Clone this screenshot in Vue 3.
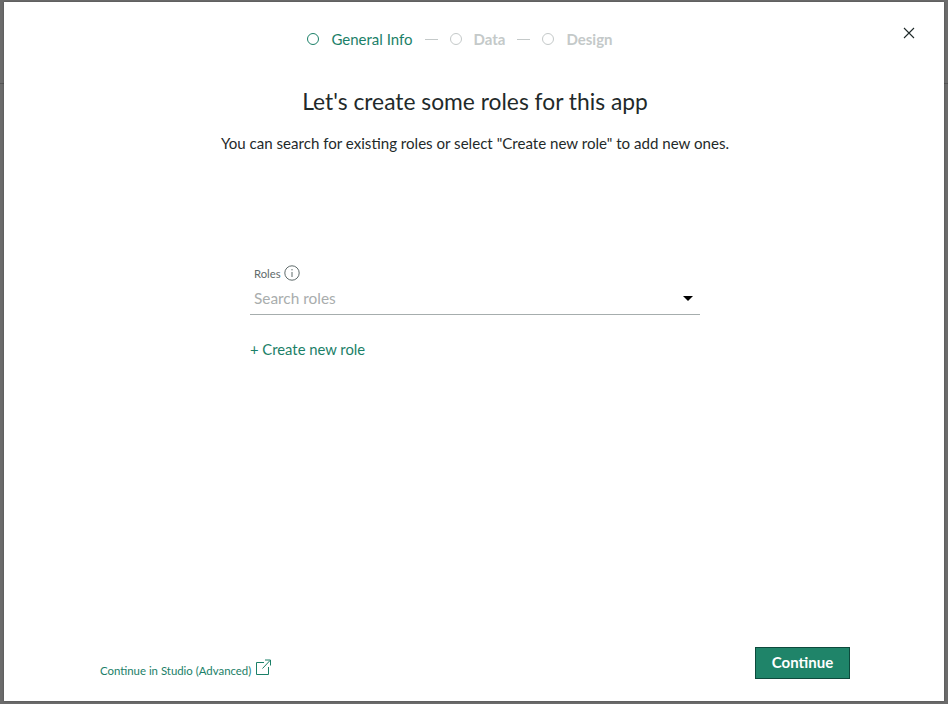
<script setup>
const steps = [
  { label: 'General Info', active: true },
  { label: 'Data', active: false },
  { label: 'Design', active: false },
]
</script>

<template>
  <div class="backdrop">
    <div class="band"></div>
    <div class="modal">
      <header class="top">
        <nav class="stepper">
          <template v-for="(s, i) in steps" :key="s.label">
            <span v-if="i" class="dash"></span>
            <span class="dot" :class="{ on: s.active }"></span>
            <span class="label" :class="{ on: s.active }">{{ s.label }}</span>
          </template>
        </nav>
        <button class="close" aria-label="Close">
          <svg width="12" height="12" viewBox="0 0 12 12"><path d="M1 1l10 10M11 1L1 11" stroke="#1f2a2a" stroke-width="1.1" fill="none"/></svg>
        </button>
      </header>
      <h1>Let's create some roles for this app</h1>
      <p class="sub">You can search for existing roles or select "Create new role" to add new ones.</p>
      <section class="form">
        <div class="field-label">
          <span>Roles</span>
          <svg width="16" height="16" viewBox="0 0 16 16"><circle cx="8" cy="8" r="7.2" fill="none" stroke="#5f6b6b" stroke-width="1"/><path d="M8 7v5M8 4v1.4" stroke="#5f6b6b" stroke-width="1" fill="none"/></svg>
        </div>
        <div class="select">
          <span>Search roles</span>
          <i class="caret"></i>
        </div>
        <a class="create">+ Create new role</a>
      </section>
      <footer class="bottom">
        <a class="studio">
          <span>Continue in Studio (Advanced)</span>
          <svg width="15" height="16" viewBox="0 0 15 16"><path d="M8 3.500H.5v12h12V8M6.500 9.500L14 1.500M9 1h5.500v5.500" fill="none" stroke="#1b8068" stroke-width="1"/></svg>
        </a>
        <button class="continue">Continue</button>
      </footer>
    </div>
  </div>
</template>

<style>
html, body { margin: 0; height: 100%; overflow: hidden; }
</style>

<style scoped>
.backdrop {
  position: relative;
  box-sizing: border-box;
  width: 948px;
  height: 704px;
  padding: 2px 4px 3px;
  background: #6b6b6b;
  font-family: "Lato", "Liberation Sans", sans-serif;
}
.band {
  position: absolute;
  left: 0;
  right: 0;
  top: 83px;
  height: 1px;
  background: #555;
}
.modal {
  position: relative;
  box-sizing: border-box;
  height: 100%;
  background: #fff;
  display: flex;
  flex-direction: column;
  align-items: center;
  box-shadow: 0 0 2px rgba(0, 0, 0, .3);
}
.top {
  align-self: stretch;
  display: flex;
  justify-content: center;
  padding: 27px 28px 0 0;
}
.stepper { display: flex; align-items: center; height: 20px; }
.dot {
  box-sizing: border-box;
  width: 12px;
  height: 12px;
  border-radius: 50%;
  border: 1px solid #c4c9c9;
}
.dot.on { border: 1.5px solid #1b8068; }
.label {
  margin-left: 12px;
  font-size: 15px;
  font-weight: 700;
  color: #c4c9c9;
}
.label.on { color: #1b8068; font-weight: 400; }
.dash { width: 13px; height: 1px; background: #c4c9c9; margin: 0 12px; }
.close {
  position: absolute;
  top: 25px;
  right: 29px;
  width: 12px;
  height: 12px;
  padding: 0;
  border: 0;
  background: none;
  display: flex;
}
h1 {
  margin: 37px 0 0 2px;
  font-size: 22.8px;
  line-height: 30px;
  font-weight: 400;
  color: #1f2a2a;
}
.sub {
  margin: 17px 0 0 2px;
  font-size: 15.1px;
  line-height: 20px;
  color: #1f2a2a;
}
.form {
  width: 450px;
  margin: 112px 0 0 2px;
  display: flex;
  flex-direction: column;
}
.field-label {
  display: flex;
  align-items: center;
  gap: 3px;
  padding-left: 4px;
  height: 16px;
  font-size: 11.3px;
  color: #5f6b6b;
}
.select {
  display: flex;
  align-items: center;
  justify-content: space-between;
  height: 30px;
  padding: 2px 7px 1px 4px;
  box-sizing: content-box;
  border-bottom: 1px solid #a6adad;
  font-size: 15.4px;
  color: #a9adad;
}
.caret {
  width: 0;
  height: 0;
  margin-top: 1px;
  border-left: 5px solid transparent;
  border-right: 5px solid transparent;
  border-top: 5px solid #000;
}
.create {
  margin-top: 24px;
  font-size: 14.8px;
  line-height: 20px;
  color: #1b8068;
}
.bottom {
  align-self: stretch;
  margin-top: auto;
  display: flex;
  justify-content: space-between;
  align-items: flex-end;
  padding: 0 94px 22px 96px;
}
.studio {
  display: flex;
  align-items: flex-start;
  gap: 5px;
  font-size: 11.4px;
  color: #1b8068;
}
.studio span { line-height: 16px; padding-top: 1px; }
.studio svg { margin-top: -3px; }
.continue {
  box-sizing: border-box;
  width: 95px;
  height: 32px;
  border: 1px solid #0d4a3c;
  background: #1f8469;
  color: #fff;
  font: 700 15px/28px "Lato", "Liberation Sans", sans-serif;
  padding: 0 0 2px;
}
</style>
